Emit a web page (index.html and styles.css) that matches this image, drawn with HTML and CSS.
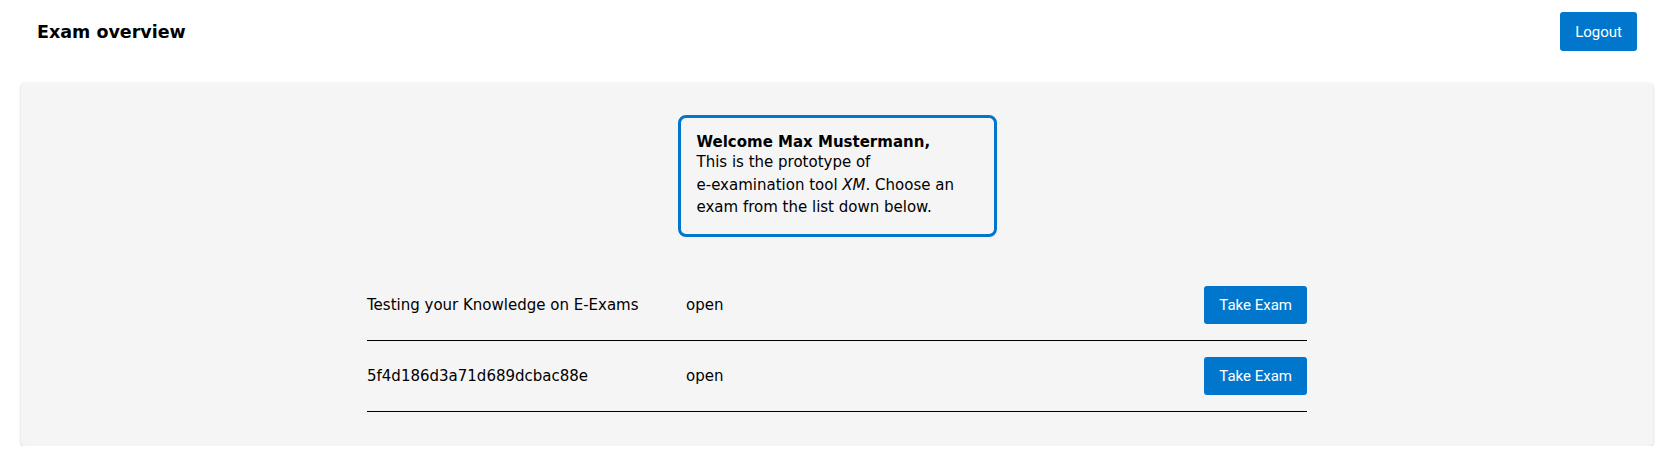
FILE: index.html
```html
<!DOCTYPE html>
<html lang="en">
<head>
<meta charset="utf-8">
<title>Exam overview</title>
<link rel="stylesheet" href="styles.css">
</head>
<body>
<div class="page">
  <header class="header">
    <h1 class="title">Exam overview</h1>
    <button class="btn btn-logout">Logout</button>
  </header>
  <main class="panel">
    <div class="welcome">
      <strong class="welcome-name">Welcome Max Mustermann,</strong>
      <p class="welcome-text">This is the prototype of <span class="nowrap">e-examination</span> tool <em>XM</em>. Choose an exam from the list down below.</p>
    </div>
    <div class="exam-list">
      <div class="exam-row">
        <span class="exam-name">Testing your Knowledge on E-Exams</span>
        <span class="exam-status">open</span>
        <button class="btn">Take Exam</button>
      </div>
      <div class="exam-row">
        <span class="exam-name">5f4d186d3a71d689dcbac88e</span>
        <span class="exam-status">open</span>
        <button class="btn">Take Exam</button>
      </div>
    </div>
  </main>
</div>
</body>
</html>
```

FILE: styles.css
```css
* { box-sizing: border-box; }

html, body {
  margin: 0;
  background: #ffffff;
  font-family: "DejaVu Sans", sans-serif;
  color: #000000;
}

.page {
  padding: 0 21px;
}

.header {
  display: flex;
  justify-content: space-between;
  align-items: center;
  padding: 12px 16px 0;
}

.title {
  margin: 0;
  font-size: 17.5px;
  font-weight: bold;
  line-height: 22px;
}

.btn {
  font-family: Roboto, "Open Sans", sans-serif;
  font-size: 15px;
  color: #ffffff;
  background: #0077cc;
  border: none;
  border-radius: 3px;
  height: 38px;
  padding: 0 15px;
  cursor: pointer;
}

.btn-logout {
  height: 39px;
}

.panel {
  margin-top: 32px;
  background: #f5f5f5;
  border-radius: 4px;
  box-shadow: 0 1px 3px rgba(0, 0, 0, 0.22);
  padding: 32px 0 34px;
  display: flex;
  flex-direction: column;
  align-items: center;
}

.welcome {
  width: 319px;
  border: 3px solid #0077cc;
  border-radius: 8px;
  padding: 15px 16px;
  font-size: 15px;
}

.welcome-name {
  display: block;
  font-weight: bold;
}

.welcome-text {
  margin: 0;
  line-height: 1.5;
}

.nowrap {
  white-space: nowrap;
}

.exam-list {
  width: 940px;
  margin-top: 33px;
}

.exam-row {
  display: flex;
  align-items: center;
  padding: 16px 0;
  border-bottom: 1px solid #000000;
  font-size: 15px;
}

.exam-name {
  width: 319px;
}

.exam-status {
  flex: 1;
}
```
